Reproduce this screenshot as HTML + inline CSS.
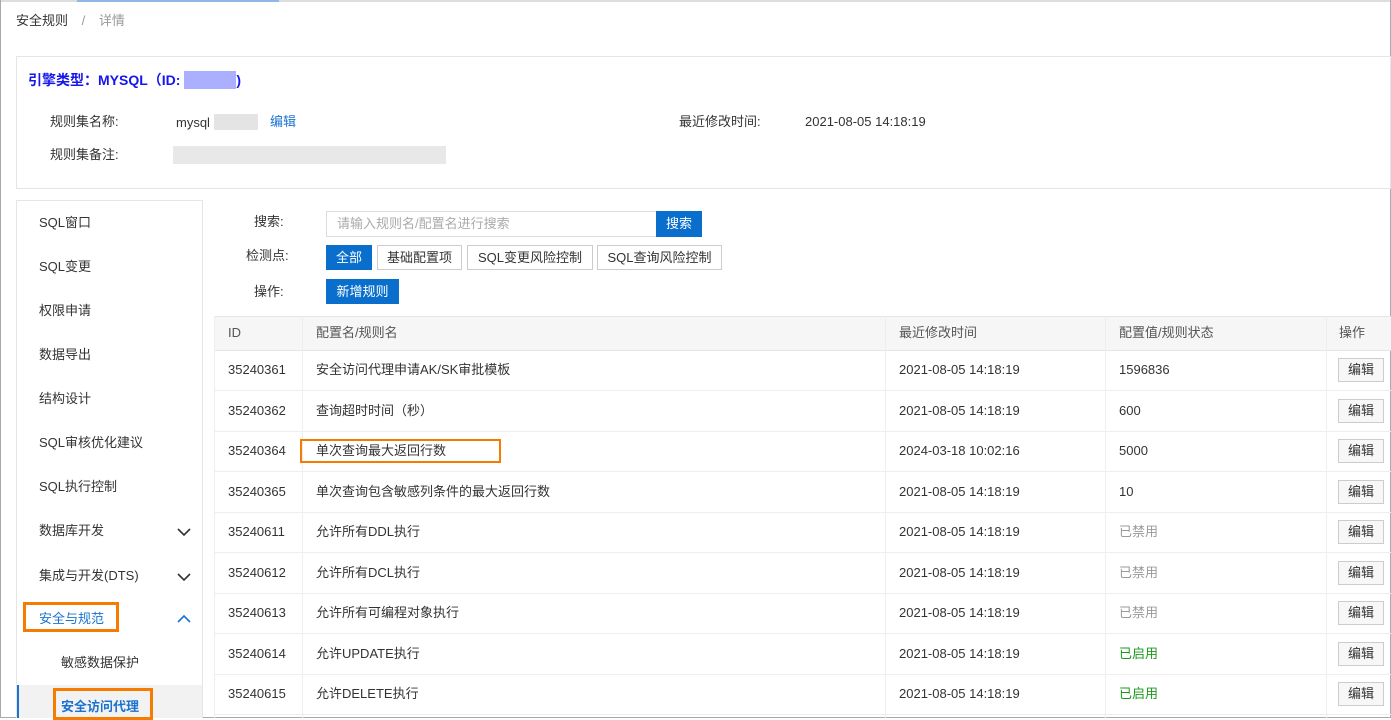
<!DOCTYPE html>
<html><head><meta charset="utf-8"><style>
*{box-sizing:border-box;margin:0;padding:0}
body{width:1391px;height:718px;overflow:hidden;background:#fff;font-family:"Liberation Sans","Noto Sans CJK SC",sans-serif;font-size:13px;line-height:16px;color:#333;position:relative}
.a{position:absolute;white-space:nowrap}
.btn{position:absolute;height:25px;line-height:23px;text-align:center;border:1px solid #ccc;background:#fff;color:#333;font-size:13px}
.blue{background:#0a6fcc;border-color:#0a6fcc;color:#fff}
.row{position:absolute;left:214px;width:1177px;height:41px;border-bottom:1px solid #eee}
.row div{position:absolute;top:0;line-height:40px}
.vl{position:absolute;top:316px;bottom:0;width:1px;background:#eee}
.row .ed{position:absolute;left:1124px;top:8px;width:46px;height:24px;line-height:22px;border:1px solid #ccc;background:#f7f7f7;text-align:center}
</style></head><body>
<div class="a" style="left:0;top:0;width:1391px;height:2px;background:#ddd"></div>
<div class="a" style="left:77px;top:0;width:202px;height:2px;background:#8fb8e8"></div>
<div class="a" style="left:0;top:0;width:1px;height:718px;background:#aaa"></div>
<div class="a" style="left:1390px;top:0;width:1px;height:718px;background:#aaa"></div>
<div class="a" style="left:0;top:717px;width:1391px;height:1px;background:#aaa"></div>
<div class="a" style="left:16px;top:13px;color:#333">安全规则 <span style="color:#999;margin:0 10px">/</span> <span style="color:#999">详情</span></div>
<div class="a" style="left:16px;top:56px;width:1375px;height:133px;border:1px solid #e5e5e5"></div>
<div class="a" style="left:28px;top:71px;font-size:14px;font-weight:bold;color:#1515ee">引擎类型：MYSQL（ID: <span style="display:inline-block;width:52px;height:18px;background:#aab0ff;vertical-align:-4px"></span>)</div>
<div class="a" style="left:50px;top:114px">规则集名称:</div>
<div class="a" style="left:176px;top:114px">mysql <span style="display:inline-block;width:44px;height:16px;background:#e4e4e4;vertical-align:-3px"></span></div>
<div class="a" style="left:270px;top:114px;color:#1a73d0">编辑</div>
<div class="a" style="left:679px;top:114px">最近修改时间:</div>
<div class="a" style="left:805px;top:114px">2021-08-05 14:18:19</div>
<div class="a" style="left:50px;top:147px">规则集备注:</div>
<div class="a" style="left:173px;top:146px;width:273px;height:18px;background:#e8e8e8"></div>
<div class="a" style="left:16px;top:200px;width:187px;height:518px;border:1px solid #e5e5e5;border-bottom:none"></div>
<div class="a" style="left:39px;top:215px">SQL窗口</div>
<div class="a" style="left:39px;top:259px">SQL变更</div>
<div class="a" style="left:39px;top:303px">权限申请</div>
<div class="a" style="left:39px;top:347px">数据导出</div>
<div class="a" style="left:39px;top:391px">结构设计</div>
<div class="a" style="left:39px;top:435px">SQL审核优化建议</div>
<div class="a" style="left:39px;top:479px">SQL执行控制</div>
<div class="a" style="left:39px;top:523px">数据库开发</div>
<div class="a" style="left:39px;top:568px">集成与开发(DTS)</div>
<svg class="a" style="left:177px;top:527px" width="14" height="10"><path d="M1 2l6 6 6-6" fill="none" stroke="#333" stroke-width="1.6"/></svg>
<svg class="a" style="left:177px;top:572px" width="14" height="10"><path d="M1 2l6 6 6-6" fill="none" stroke="#333" stroke-width="1.6"/></svg>
<svg class="a" style="left:177px;top:614px" width="14" height="10"><path d="M1 8l6-6 6 6" fill="none" stroke="#1a73d0" stroke-width="1.6"/></svg>
<div class="a" style="left:23px;top:602px;width:96px;height:30px;border:3px solid #f57c00"></div>
<div class="a" style="left:39px;top:611px;color:#1a73d0">安全与规范</div>
<div class="a" style="left:61px;top:655px">敏感数据保护</div>
<div class="a" style="left:17px;top:685px;width:185px;height:33px;background:#f2f2f2;border-left:2px solid #1a73d0"></div>
<div class="a" style="left:53px;top:688px;width:100px;height:32px;border:3px solid #f57c00"></div>
<div class="a" style="left:61px;top:699px;color:#1a73d0;font-weight:bold">安全访问代理</div>
<div class="a" style="left:254px;top:214px">搜索:</div>
<div class="a" style="left:326px;top:211px;width:331px;height:26px;border:1px solid #ddd;color:#aaa;line-height:24px;padding-left:10px">请输入规则名/配置名进行搜索</div>
<div class="btn blue" style="left:656px;top:211px;width:46px;height:26px">搜索</div>
<div class="a" style="left:246px;top:248px">检测点:</div>
<div class="btn blue" style="left:326px;top:245px;width:46px">全部</div>
<div class="btn" style="left:377px;top:245px;width:85px">基础配置项</div>
<div class="btn" style="left:467px;top:245px;width:126px">SQL变更风险控制</div>
<div class="btn" style="left:597px;top:245px;width:125px">SQL查询风险控制</div>
<div class="a" style="left:254px;top:284px">操作:</div>
<div class="btn blue" style="left:326px;top:279px;width:73px">新增规则</div>
<div class="a" style="left:214px;top:316px;width:1177px;height:35px;background:#f6f6f6;border-top:1px solid #e5e5e5;border-bottom:1px solid #e5e5e5"></div>
<div class="vl" style="left:214px"></div><div class="vl" style="left:302px"></div><div class="vl" style="left:885px"></div><div class="vl" style="left:1105px"></div><div class="vl" style="left:1326px"></div>
<div class="a" style="left:228px;top:325px;color:#555">ID</div>
<div class="a" style="left:316px;top:325px;color:#555">配置名/规则名</div>
<div class="a" style="left:899px;top:325px;color:#555">最近修改时间</div>
<div class="a" style="left:1119px;top:325px;color:#555">配置值/规则状态</div>
<div class="a" style="left:1339px;top:325px;color:#555">操作</div>

<div class="row" style="top:350px"><div style="left:14px">35240361</div><div style="left:102px">安全访问代理申请AK/SK审批模板</div><div style="left:685px">2021-08-05 14:18:19</div><div style="left:905px">1596836</div><div class="ed">编辑</div></div>
<div class="row" style="top:391px"><div style="left:14px">35240362</div><div style="left:102px">查询超时时间（秒）</div><div style="left:685px">2021-08-05 14:18:19</div><div style="left:905px">600</div><div class="ed">编辑</div></div>
<div class="row" style="top:431px"><div style="left:14px">35240364</div><div style="left:102px">单次查询最大返回行数</div><div style="left:685px">2024-03-18 10:02:16</div><div style="left:905px">5000</div><div class="ed">编辑</div></div>
<div class="row" style="top:472px"><div style="left:14px">35240365</div><div style="left:102px">单次查询包含敏感列条件的最大返回行数</div><div style="left:685px">2021-08-05 14:18:19</div><div style="left:905px">10</div><div class="ed">编辑</div></div>
<div class="row" style="top:512px"><div style="left:14px">35240611</div><div style="left:102px">允许所有DDL执行</div><div style="left:685px">2021-08-05 14:18:19</div><div style="left:905px;color:#999">已禁用</div><div class="ed">编辑</div></div>
<div class="row" style="top:553px"><div style="left:14px">35240612</div><div style="left:102px">允许所有DCL执行</div><div style="left:685px">2021-08-05 14:18:19</div><div style="left:905px;color:#999">已禁用</div><div class="ed">编辑</div></div>
<div class="row" style="top:593px"><div style="left:14px">35240613</div><div style="left:102px">允许所有可编程对象执行</div><div style="left:685px">2021-08-05 14:18:19</div><div style="left:905px;color:#999">已禁用</div><div class="ed">编辑</div></div>
<div class="row" style="top:634px"><div style="left:14px">35240614</div><div style="left:102px">允许UPDATE执行</div><div style="left:685px">2021-08-05 14:18:19</div><div style="left:905px;color:#1a9a1a">已启用</div><div class="ed">编辑</div></div>
<div class="row" style="top:674px"><div style="left:14px">35240615</div><div style="left:102px">允许DELETE执行</div><div style="left:685px">2021-08-05 14:18:19</div><div style="left:905px;color:#1a9a1a">已启用</div><div class="ed">编辑</div></div>
<div class="a" style="left:300px;top:439px;width:201px;height:24px;border:2px solid #f57c00"></div>
</body></html>
